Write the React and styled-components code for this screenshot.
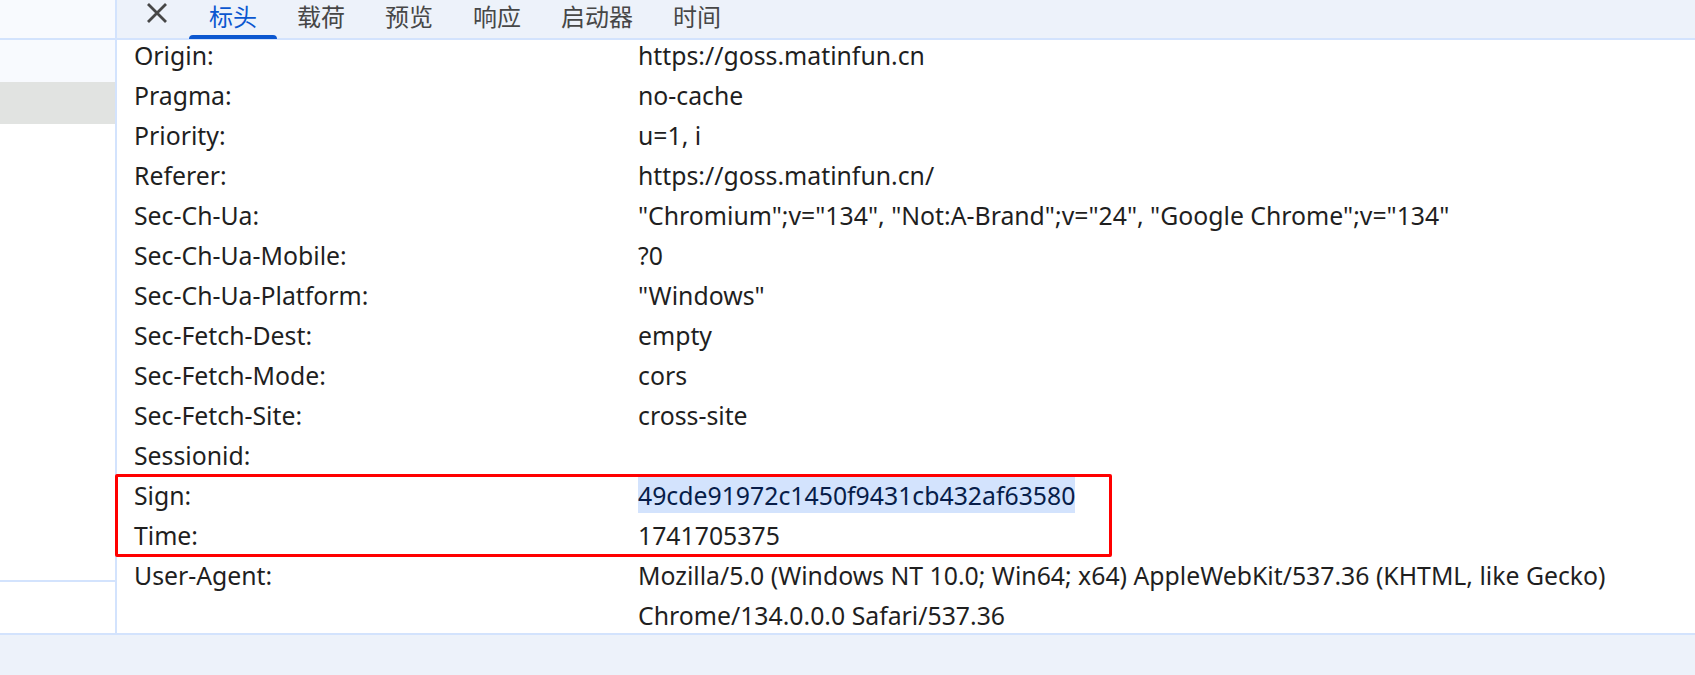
import React from 'react';
import styled, { createGlobalStyle } from 'styled-components';

const GlobalStyle = createGlobalStyle`
  html, body {
    margin: 0;
    padding: 0;
    background: #ffffff;
    overflow: hidden;
  }
  body {
    font-family: "Noto Sans", "Noto Sans CJK SC", sans-serif;
    color: #1f1f1f;
  }
`;

const headers = [
  ['Origin:', 'https://goss.matinfun.cn'],
  ['Pragma:', 'no-cache'],
  ['Priority:', 'u=1, i'],
  ['Referer:', 'https://goss.matinfun.cn/'],
  ['Sec-Ch-Ua:', '"Chromium";v="134", "Not:A-Brand";v="24", "Google Chrome";v="134"'],
  ['Sec-Ch-Ua-Mobile:', '?0'],
  ['Sec-Ch-Ua-Platform:', '"Windows"'],
  ['Sec-Fetch-Dest:', 'empty'],
  ['Sec-Fetch-Mode:', 'cors'],
  ['Sec-Fetch-Site:', 'cross-site'],
  ['Sessionid:', ''],
];

const marked = [
  ['Sign:', '49cde91972c1450f9431cb432af63580', true],
  ['Time:', '1741705375', false],
];

const after = [
  ['User-Agent:', 'Mozilla/5.0 (Windows NT 10.0; Win64; x64) AppleWebKit/537.36 (KHTML, like Gecko) Chrome/134.0.0.0 Safari/537.36'],
];

const tabs = ['标头', '载荷', '预览', '响应', '启动器', '时间'];

const CloseIcon = () => (
  <svg width="22" height="22" viewBox="0 0 22 22">
    <path d="M2 2 L20 20 M20 2 L2 20" stroke="#474747" strokeWidth="2.8" fill="none" />
  </svg>
);

const HeaderRow = ({ name, value, selected }) => (
  <Row>
    <Name>{name}</Name>
    <Value>{selected ? <Selected>{value}</Selected> : value}</Value>
  </Row>
);

export default function App() {
  return (
    <>
      <GlobalStyle />
      <Page>
        <Main>
          <Sidebar>
            <SideHeader />
            <SideRow />
            <SideRow $active />
            <SideFill />
            <SideFooter />
          </Sidebar>
          <Content>
            <TabBar>
              <CloseButton>
                <CloseIcon />
              </CloseButton>
              {tabs.map((t, i) => (
                <Tab key={t} $active={i === 0}>{t}</Tab>
              ))}
            </TabBar>
            <List>
              {headers.map(([n, v]) => (
                <HeaderRow key={n} name={n} value={v} />
              ))}
              <Marked>
                {marked.map(([n, v, s]) => (
                  <HeaderRow key={n} name={n} value={v} selected={s} />
                ))}
              </Marked>
              {after.map(([n, v]) => (
                <HeaderRow key={n} name={n} value={v} />
              ))}
            </List>
          </Content>
        </Main>
        <Footer />
      </Page>
    </>
  );
}

const Page = styled.div`
  width: 1695px;
  height: 675px;
  display: flex;
  flex-direction: column;
`;

const Main = styled.div`
  height: 633px;
  display: flex;
  overflow: hidden;
`;

const Sidebar = styled.div`
  width: 115px;
  flex-shrink: 0;
  border-right: 2px solid #d3e3fd;
  display: flex;
  flex-direction: column;
`;

const SideHeader = styled.div`
  height: 38px;
  background: #f8fafe;
  border-bottom: 2px solid #d3e3fd;
`;

const SideRow = styled.div`
  height: 42px;
  background: ${(p) => (p.$active ? '#e1e3e1' : '#f8fafe')};
`;

const SideFill = styled.div`
  flex: 1;
  background: #ffffff;
`;

const SideFooter = styled.div`
  height: 51px;
  border-top: 2px solid #d3e3fd;
  background: #ffffff;
`;

const Content = styled.div`
  flex: 1;
  display: flex;
  flex-direction: column;
  min-width: 0;
`;

const TabBar = styled.div`
  position: relative;
  z-index: 2;
  height: 38px;
  flex-shrink: 0;
  background: #edf2fa;
  border-bottom: 2px solid #d3e3fd;
  display: flex;
  align-items: stretch;
  padding-left: 19px;
  font-family: "Noto Sans CJK SC", "Noto Sans", sans-serif;
`;

const CloseButton = styled.div`
  width: 42px;
  margin-right: 11px;
  display: flex;
  justify-content: center;
  align-items: flex-start;
  padding-top: 2px;
`;

const Tab = styled.div`
  position: relative;
  padding: 4px 20px 0;
  font-size: 24px;
  line-height: 24px;
  color: ${(p) => (p.$active ? '#0b57d0' : '#474747')};

  &::after {
    content: "";
    display: ${(p) => (p.$active ? 'block' : 'none')};
    position: absolute;
    left: 0;
    right: 0;
    bottom: -1px;
    height: 4px;
    border-radius: 4px 4px 0 0;
    background: #0b57d0;
  }
`;

const List = styled.div`
  margin-top: -5px;
  display: flex;
  flex-direction: column;
`;

const Row = styled.div`
  display: grid;
  grid-template-columns: 504px 1fr;
  padding-left: 17px;
  padding-right: 20px;
  font-size: 24.8px;
  line-height: 40px;
  min-height: 40px;
`;

const Name = styled.div`
  color: #1f1f1f;
  white-space: nowrap;
`;

const Value = styled.div`
  color: #1f1f1f;
  word-break: normal;
`;

const Selected = styled.span`
  background: #d3e3fd;
  color: #071d49;
  padding: 1px 0 1px;
`;

const Marked = styled.div`
  position: relative;

  &::after {
    content: "";
    position: absolute;
    top: -1px;
    left: -2px;
    width: 997px;
    bottom: -2px;
    box-sizing: border-box;
    border: 3.5px solid #ff0000;
    border-radius: 2px;
    pointer-events: none;
  }
`;

const Footer = styled.div`
  height: 40px;
  background: #edf2fa;
  border-top: 2px solid #d3e3fd;
`;
